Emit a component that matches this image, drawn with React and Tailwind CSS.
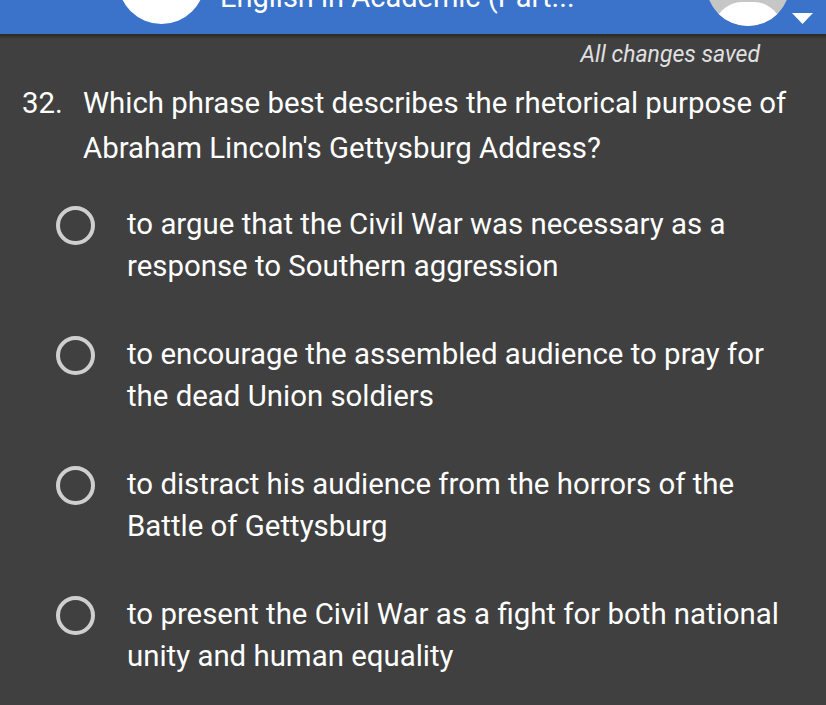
import React from 'react';

const options = [
  'to argue that the Civil War was necessary as a response to Southern aggression',
  'to encourage the assembled audience to pray for the dead Union soldiers',
  'to distract his audience from the horrors of the Battle of Gettysburg',
  'to present the Civil War as a fight for both national unity and human equality',
];

function Header() {
  return (
    <div className="relative h-[34px] overflow-hidden bg-[#3a73c9]">
      <div className="flex items-end h-[34px]">
        <div className="ml-[118px] w-[87px] h-[87px] rounded-full bg-white shrink-0 mb-[10px]" />
        <div className="ml-[15px] text-white text-[29px] leading-none whitespace-nowrap mb-[22px]">
          English in Academic (Part...
        </div>
        <div className="ml-auto flex items-start self-stretch">
          <div className="relative w-[84px] h-[84px] rounded-full overflow-hidden bg-[#c6c6c6] -mt-[58px] shrink-0">
            <div className="absolute left-[8px] top-[60px] w-[68px] h-[56px] rounded-full bg-white" />
          </div>
          <svg width="21" height="11" viewBox="0 0 21 11" className="ml-[2px] mr-[13px] mt-[13px]">
            <polygon points="0,0 21,0 10.5,11" fill="#fff" />
          </svg>
        </div>
      </div>
    </div>
  );
}

function Radio() {
  return (
    <div className="w-[39px] h-[39px] rounded-full border-[4px] border-[#cfcfcf] shrink-0" />
  );
}

export default function App() {
  return (
    <div className="w-[826px] h-[705px] overflow-hidden bg-[#404040] font-['Roboto',sans-serif]">
      <Header />
      <div className="h-[5px] bg-gradient-to-b from-[#2c2722] to-[#404040]" />
      <div className="text-right pr-[66px] pt-[2px] text-[23px] italic text-[#e0e0e0] leading-[28px]">
        All changes saved
      </div>
      <div className="flex pl-[22px] pr-[20px] pt-[12px] text-[29.4px] leading-[45px] text-white">
        <span className="w-[61px] shrink-0">32.</span>
        <span>
          Which phrase best describes the rhetorical purpose of Abraham Lincoln's Gettysburg Address?
        </span>
      </div>
      <div className="flex flex-col gap-[46px] pt-[32px]">
        {options.map((o, i) => (
          <div key={i} className="flex items-start pl-[56px] pr-[30px]">
            <div className="pt-[3px]">
              <Radio />
            </div>
            <div className="ml-[32px] text-[29.4px] leading-[42px] text-white">{o}</div>
          </div>
        ))}
      </div>
    </div>
  );
}
